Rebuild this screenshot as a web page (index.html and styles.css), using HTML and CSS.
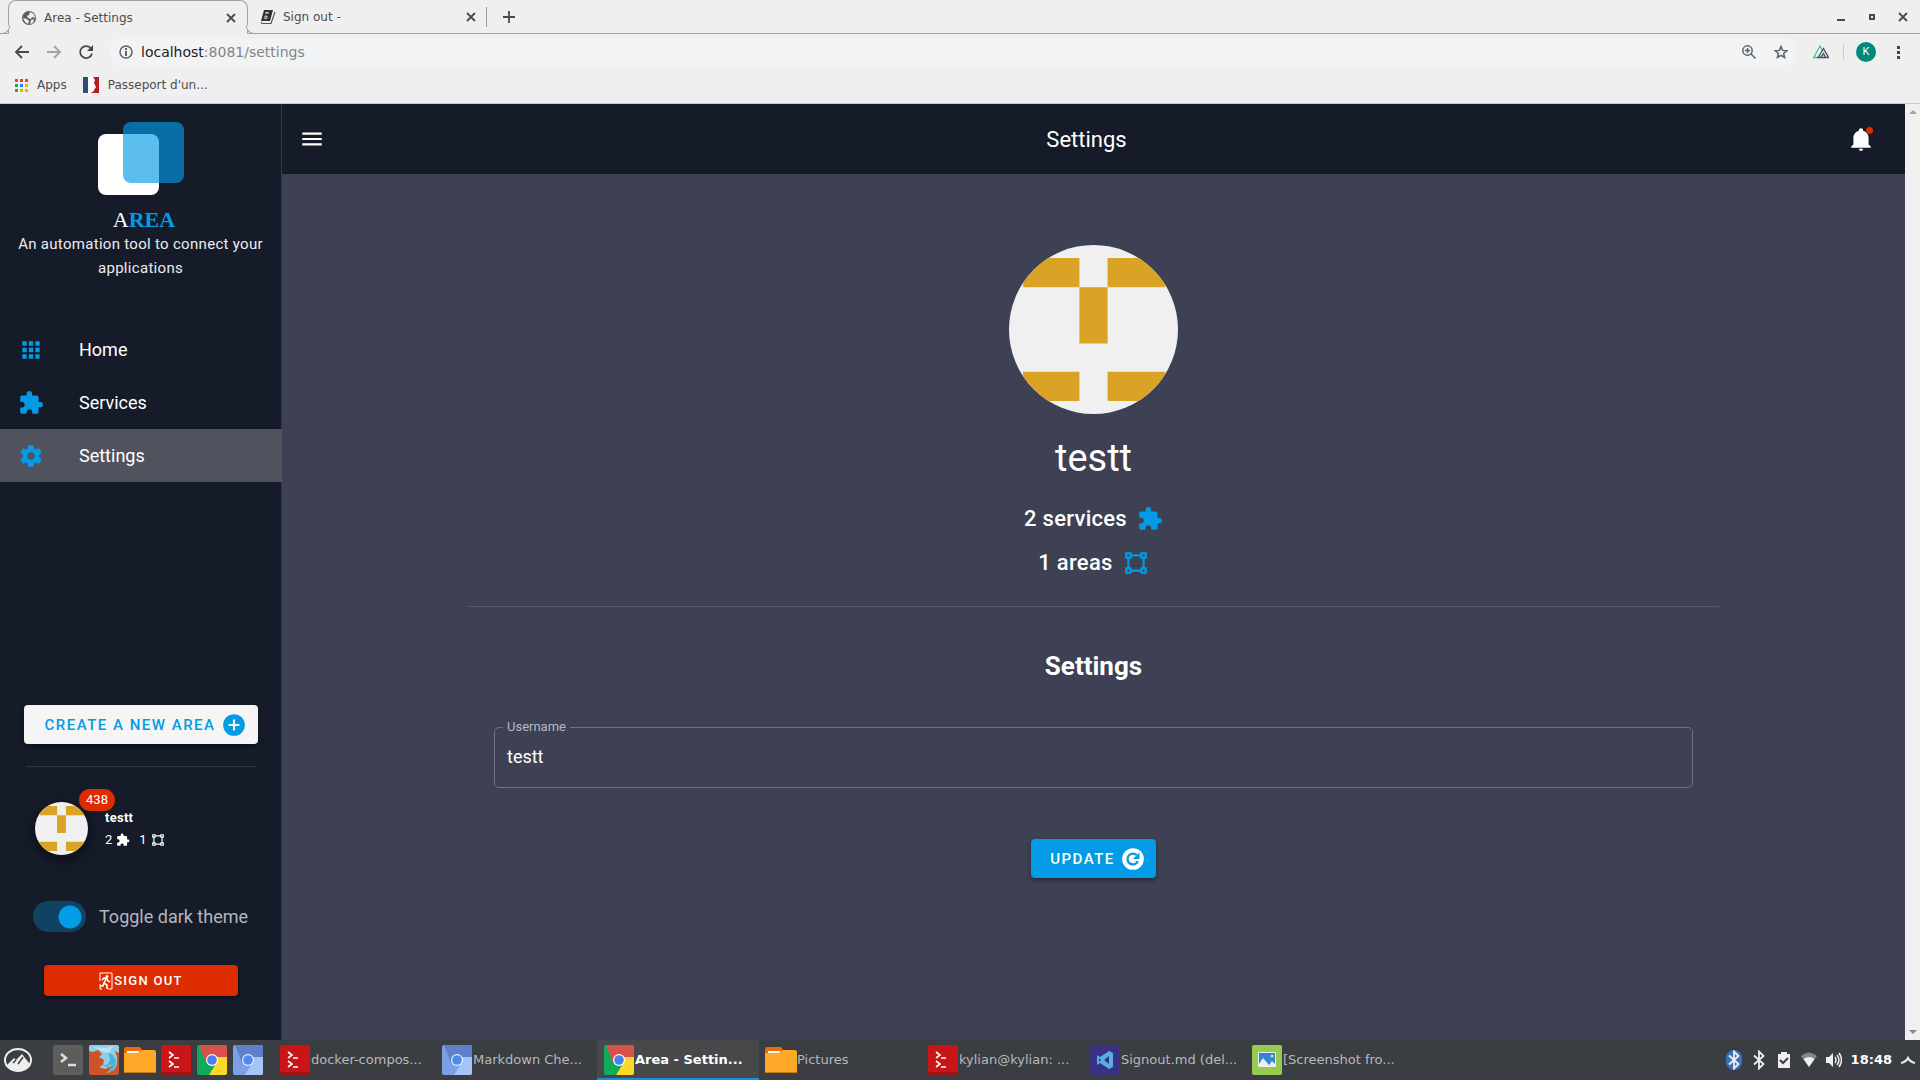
FILE: index.html
```html
<!DOCTYPE html>
<html lang="en">
<head>
<meta charset="utf-8">
<title>Area - Settings</title>
<link rel="stylesheet" href="styles.css">
</head>
<body>
<svg class="sprite" aria-hidden="true">
  <symbol id="apps" viewBox="0 0 24 24"><path d="M16,20H20V16H16M16,14H20V10H16M10,8H14V4H10M16,8H20V4H16M10,14H14V10H10M4,14H8V10H4M4,20H8V16H4M10,20H14V16H10M4,8H8V4H4V8Z"/></symbol>
  <symbol id="puzzle" viewBox="0 0 24 24"><path d="M20.5,11H19V7C19,5.89 18.1,5 17,5H13V3.5A2.5,2.5 0 0,0 10.5,1A2.5,2.5 0 0,0 8,3.5V5H4A2,2 0 0,0 2,7V10.8H3.5C5,10.8 6.2,12 6.2,13.5C6.2,15 5,16.2 3.5,16.2H2V20A2,2 0 0,0 4,22H7.8V20.5C7.8,19 9,17.8 10.5,17.8C12,17.8 13.2,19 13.2,20.5V22H17A2,2 0 0,0 19,20V16H20.5A2.5,2.5 0 0,0 23,13.5A2.5,2.5 0 0,0 20.5,11Z"/></symbol>
  <symbol id="cog" viewBox="0 0 24 24"><path d="M12,15.5A3.5,3.5 0 0,1 8.5,12A3.5,3.5 0 0,1 12,8.5A3.5,3.5 0 0,1 15.5,12A3.5,3.5 0 0,1 12,15.5M19.43,12.97C19.47,12.65 19.5,12.33 19.5,12C19.5,11.67 19.47,11.34 19.43,11L21.54,9.37C21.73,9.22 21.78,8.95 21.66,8.73L19.66,5.27C19.54,5.05 19.27,4.96 19.05,5.05L16.56,6.05C16.04,5.66 15.5,5.32 14.87,5.07L14.5,2.42C14.46,2.18 14.25,2 14,2H10C9.75,2 9.54,2.18 9.5,2.42L9.13,5.07C8.5,5.32 7.96,5.66 7.44,6.05L4.95,5.05C4.73,4.96 4.46,5.05 4.34,5.27L2.34,8.73C2.21,8.95 2.27,9.22 2.46,9.37L4.57,11C4.53,11.34 4.5,11.67 4.5,12C4.5,12.33 4.53,12.65 4.57,12.97L2.46,14.63C2.27,14.78 2.21,15.05 2.34,15.27L4.34,18.73C4.46,18.95 4.73,19.03 4.95,18.95L7.44,17.94C7.96,18.34 8.5,18.68 9.13,18.93L9.5,21.58C9.54,21.82 9.75,22 10,22H14C14.25,22 14.46,21.82 14.5,21.58L14.87,18.93C15.5,18.67 16.04,18.34 16.56,17.94L19.05,18.95C19.27,19.03 19.54,18.95 19.66,18.73L21.66,15.27C21.78,15.05 21.73,14.78 21.54,14.63L19.43,12.97Z"/></symbol>
  <symbol id="vector" viewBox="0 0 24 24"><path d="M2,2H8V4H16V2H22V8H20V16H22V22H16V20H8V22H2V16H4V8H2V2M16,8V6H8V8H6V16H8V18H16V16H18V8H16M4,4V6H6V4H4M18,4V6H20V4H18M4,18V20H6V18H4M18,18V20H20V18H18Z"/></symbol>
  <symbol id="plus-circle" viewBox="0 0 24 24"><path d="M17,13H13V17H11V13H7V11H11V7H13V11H17M12,2A10,10 0 0,0 2,12A10,10 0 0,0 12,22A10,10 0 0,0 22,12A10,10 0 0,0 12,2Z"/></symbol>
  <symbol id="bell" viewBox="0 0 24 24"><path d="M21,19V20H3V19L5,17V11C5,7.9 7.03,5.17 10,4.29C10,4.19 10,4.1 10,4A2,2 0 0,1 12,2A2,2 0 0,1 14,4C14,4.1 14,4.19 14,4.29C16.97,5.17 19,7.9 19,11V17L21,19M14,21A2,2 0 0,1 12,23A2,2 0 0,1 10,21"/></symbol>
  <symbol id="menu" viewBox="0 0 24 24"><path d="M3,6H21V8H3V6M3,11H21V13H3V11M3,16H21V18H3V16Z"/></symbol>
  <symbol id="bluetooth" viewBox="0 0 16 20"><path d="M3 5.500L12.500 14 8 18.500V1.500L12.500 6 3 14.500" fill="none" stroke="#eee" stroke-width="1.800"/></symbol>
  <symbol id="identicon" viewBox="0 0 168 168"><path fill="#f0f0f0" d="M0 0h168v168H0z"/><path fill="#d9a326" d="M14 13h56v29H14zM98 13h57v29H98zM70 42h28v56H70zM14 126h56v29H14zM98 126h57v29H98z"/></symbol>
  <symbol id="app-folder" viewBox="0 0 32 32"><path fill="#ef6c00" d="M0 5q0-2 2-2h14l2 3v6H0z"/><path fill="#ffa726" d="M0 9h15l3-3h12q2 0 2 2v21H0z"/><path fill="#fff" d="M3 7h13l-2 2H3z"/><path fill="#ca7a13" d="M0 28h32v1H0z"/></symbol>
  <symbol id="app-terminator" viewBox="0 0 32 32"><rect x="1" y="1" width="30" height="30" rx="2" fill="#c91517"/><path fill="#a31214" d="M1 28h30v1q0 2-2 2H3q-2 0-2-2z"/><path d="M9 8l4 3-4 3m0 3l4 3-4 3M14 14h5M14 23h5" fill="none" stroke="#fff" stroke-width="1.600"/></symbol>
  <symbol id="app-chrome" viewBox="0 0 32 32"><rect x="1" y="1" width="30" height="30" rx="2" fill="#0dac5c"/><path fill="#d9514a" d="M3 1h26q2 0 2 2v10H16l-6 6z"/><path fill="#fbd924" d="M16 13h15v16q0 2-2 2H13l8-13z"/><circle cx="16" cy="16" r="6" fill="#fff"/><circle cx="16" cy="16" r="4.800" fill="#4c80e6"/></symbol>
  <symbol id="app-chromium" viewBox="0 0 32 32"><rect x="1" y="1" width="30" height="30" rx="2" fill="#7ba1e4"/><path fill="#5c80c9" d="M3 1h26q2 0 2 2v10H16l-6 6z"/><path fill="#a7c4f9" d="M16 13h15v16q0 2-2 2H13l8-13z"/><circle cx="16" cy="16" r="6" fill="#e6eefc"/><circle cx="16" cy="16" r="4.800" fill="#4f8bea"/></symbol>
</svg>

<header class="browser">
  <div class="tabstrip">
    <div class="tab tab-active">
      <svg class="i16" viewBox="0 0 16 16"><circle cx="8" cy="8" r="7" fill="#5a5e63"/><path fill="#efefef" d="M9 2l4 2 1 4-3-1-1 2-3-1-1-2 2-1zM2 8l4 1 2 2-1 3-3-2zM10 10l3-1-1 4-3 1z"/></svg>
      <span class="tab-title">Area - Settings</span>
      <button class="plain" aria-label="Close tab"><svg class="i12" viewBox="0 0 12 12"><path class="line" d="M2 2l8 8M10 2l-8 8"/></svg></button>
    </div>
    <div class="tab">
      <svg class="i16" viewBox="0 0 16 16"><path fill="#303030" d="M4 1h9l-3 11H1z"/><path fill="none" stroke="#555" stroke-width="1.200" d="M1 13l1 1.500h9L15 3"/><path stroke="#ddd" fill="none" d="M6 5V3l1 1 1-1v2M5 10V7h2v2z"/></svg>
      <span class="tab-title">Sign out -</span>
      <button class="plain" aria-label="Close tab"><svg class="i12" viewBox="0 0 12 12"><path class="line" d="M2 2l8 8M10 2l-8 8"/></svg></button>
    </div>
    <button class="plain new-tab" aria-label="New tab"><svg class="i12" viewBox="0 0 12 12"><path class="line" d="M6 0v12M0 6h12"/></svg></button>
    <div class="window-buttons">
      <button class="plain" aria-label="Minimize"><svg class="i12" viewBox="0 0 12 12"><path fill="#4a4a4a" d="M2 8h8v2H2z"/></svg></button>
      <button class="plain" aria-label="Maximize"><svg class="i12" viewBox="0 0 12 12"><path fill="none" stroke="#4a4a4a" stroke-width="2" d="M4 4h4v4H4z"/></svg></button>
      <button class="plain" aria-label="Close"><svg class="i12" viewBox="0 0 12 12"><path class="line" d="M2 2l8 8M10 2l-8 8"/></svg></button>
    </div>
  </div>
  <div class="toolbar">
    <button class="plain" aria-label="Back"><svg class="i16" viewBox="0 0 16 16"><path class="line" d="M15 8H2M8 2L2 8l6 6"/></svg></button>
    <button class="plain faded" aria-label="Forward"><svg class="i16" viewBox="0 0 16 16"><path class="line" d="M1 8h13M8 2l6 6-6 6"/></svg></button>
    <button class="plain" aria-label="Reload"><svg class="i16" viewBox="0 0 16 16"><path class="line" d="M13 4.500A6 6 0 1 0 14 9.500"/><path fill="#444" d="M15 1v6H9z"/></svg></button>
    <div class="omnibox">
      <svg class="i14" viewBox="0 0 14 14"><circle cx="7" cy="7" r="6" fill="none" stroke="#5f6368" stroke-width="1.500"/><path fill="#5f6368" d="M6 6h2v5H6zM6 3h2v2H6z"/></svg>
      <div class="url"><b>localhost</b>:8081/settings</div>
      <button class="plain" aria-label="Zoom"><svg class="i14" viewBox="0 0 14 14"><circle cx="5.500" cy="5.500" r="4.700" fill="none" stroke="#5f6368" stroke-width="1.500"/><path fill="none" stroke="#5f6368" stroke-width="1.500" d="M9 9l4.500 4.500M3 5.500h5M5.500 3v5"/></svg></button>
      <button class="plain" aria-label="Bookmark"><svg class="i14" viewBox="0 0 14 14"><path fill="none" stroke="#5f6368" stroke-width="1.500" d="M7 1.500l1.600 3.900 4.200.3-3.200 2.700 1 4.100L7 10.300l-3.600 2.200 1-4.100-3.200-2.700 4.200-.3z"/></svg></button>
    </div>
    <svg class="i16" viewBox="0 0 16 16"><path fill="none" stroke="#2ecc95" stroke-width="1.300" d="M5 13.500H.7L7 2l3 5.500"/><path fill="none" stroke="#435466" stroke-width="1.300" d="M5 13.500L10.500 4.500l5 9zM7.500 13.500l3-4 2 4"/></svg>
    <span class="avatar-k">K</span>
    <button class="plain" aria-label="Menu"><svg class="i14" viewBox="0 0 14 14"><path fill="#444" d="M5 1h3v3H5zM5 6h3v3H5zM5 11h3v3H5z"/></svg></button>
  </div>
  <nav class="bookmarks" aria-label="Bookmarks">
    <a href="#apps-page"><svg class="i14" viewBox="0 0 14 14"><path fill="#ea4335" d="M1 1h3v3H1zM6 1h3v3H6zM11 1h3v3h-3z"/><path fill="#2e9e5b" d="M1 6h3v3H1zM1 11h3v3H1z"/><path fill="#1a7ff0" d="M6 6h3v3H6z"/><path fill="#f9ab00" d="M11 6h3v3h-3zM6 11h3v3H6zM11 11h3v3h-3z"/></svg>Apps</a>
    <a href="#passeport"><svg class="i16" viewBox="0 0 16 16"><path fill="#fff" d="M0 0h16v16H0z"/><path fill="#344a78" d="M0 0h5v16H0z"/><path fill="#b81c1c" d="M10 0h6v16H7q4-1 4-3l2-3-2-4 1-3z"/></svg>Passeport d'un...</a>
  </nav>
</header>

<div class="viewport">
  <aside class="sidebar">
    <div class="brand">
      <svg class="brand-logo" viewBox="0 0 86 74"><rect x="0" y="12" width="61" height="61" rx="8" fill="#fff"/><rect x="25" y="0" width="61" height="61" rx="8" fill="#039be5" fill-opacity=".65"/></svg>
      <div class="brand-name">A<b>REA</b></div>
      <p class="brand-text">An automation tool to connect your applications</p>
    </div>
    <nav class="menu" aria-label="Main">
      <a href="#home"><svg class="icon"><use href="#apps"/></svg>Home</a>
      <a href="#services"><svg class="icon"><use href="#puzzle"/></svg>Services</a>
      <a class="current" href="#settings"><svg class="icon"><use href="#cog"/></svg>Settings</a>
    </nav>
    <div class="sidebar-foot">
      <button class="btn btn-light">Create a new area<svg class="icon"><use href="#plus-circle"/></svg></button>
      <hr class="rule">
      <div class="user">
        <div class="user-avatar">
          <svg class="face"><use href="#identicon"/></svg>
          <span class="count">438</span>
        </div>
        <div class="user-info">
          <strong>testt</strong>
          <span class="user-stats">2<svg class="i14"><use href="#puzzle"/></svg><span>1</span><svg class="i14"><use href="#vector"/></svg></span>
        </div>
      </div>
      <label class="toggle"><input type="checkbox" checked>Toggle dark theme</label>
      <button class="btn btn-danger"><svg class="exit" viewBox="0 0 14 18"><path fill="none" stroke="#fff" d="M1 9V1h12v16H9M1 17v-5M3 17H1"/><circle cx="8" cy="4.500" r="1.500" fill="#fff"/><path fill="none" stroke="#fff" stroke-width="1.600" d="M3 8l2-2 3 1 1 2 2 1M7 7l-2 4 3 2v4M5 11l-1 3H1"/></svg>Sign out</button>
    </div>
  </aside>

  <div class="page">
    <div class="appbar">
      <button class="plain icon-btn" aria-label="Toggle menu"><svg class="icon"><use href="#menu"/></svg></button>
      <div class="appbar-title">Settings</div>
      <button class="plain icon-btn" aria-label="Notifications"><svg class="icon"><use href="#bell"/></svg><span class="dot"></span></button>
    </div>
    <main class="content">
      <section class="profile">
        <svg class="portrait"><use href="#identicon"/></svg>
        <h1>testt</h1>
        <p class="stat">2 services<svg class="icon"><use href="#puzzle"/></svg></p>
        <p class="stat">1 areas<svg class="icon"><use href="#vector"/></svg></p>
      </section>
      <form class="settings">
        <h2>Settings</h2>
        <fieldset class="field">
          <legend><label for="username">Username</label></legend>
          <input id="username" type="text" value="testt">
        </fieldset>
        <button class="btn btn-primary" type="button">Update<svg class="icon" viewBox="0 0 24 24"><circle cx="12" cy="12" r="10" fill="#fff"/><path fill="none" stroke="#039be5" stroke-width="2.200" d="M15.500 8.500A5 5 0 1 0 16.500 14"/><path fill="#039be5" d="M18 6v6h-6z"/></svg></button>
      </form>
    </main>
  </div>

  <div class="scrollbar" aria-hidden="true">
    <svg class="arrow" viewBox="0 0 8 4"><path fill="#a3a3a3" d="M0 4l4-4 4 4z"/></svg>
    <svg class="arrow" viewBox="0 0 8 4"><path fill="#888" d="M0 0l4 4 4-4z"/></svg>
  </div>
</div>

<footer class="taskbar">
  <svg class="start" viewBox="0 0 30 30"><ellipse cx="15" cy="15" rx="13" ry="11" fill="none" stroke="#eee" stroke-width="2"/><path fill="#eee" d="M4 20l7-7 2 2 6-6 3 4 5 6q-4 7-12 7T4 20z"/><path stroke="#3a3d42" stroke-width="1.500" d="M10 18l3-3M15 19l5-7"/></svg>
  <div class="launchers">
    <svg class="app" viewBox="0 0 32 32"><rect x="1" y="1" width="30" height="30" rx="2" fill="#5d5d5d"/><path fill="none" stroke="#ddd" stroke-width="2.500" d="M9 10l5 4-5 4M16 21h8"/></svg>
    <svg class="app" viewBox="0 0 32 32"><rect x="1" y="1" width="30" height="30" rx="2" fill="#cd5427"/><path fill="#8fd0e8" d="M1 3q0-2 2-2h26q2 0 2 2v6l-4-2 2 6v7q-2 8-11 9 5-3 5-7l-6 3-6-2 4-2 1-5-5-3 3-3-4-4-5 2-4-1z"/><path fill="#4bb3d6" d="M20 9l5 2 3 6q0 9-8 12 4-5 3-9l-4 3-4-1 5-2 2-5z"/><path fill="#bce5f2" d="M5 3l12 1 8-2-4 7-7-2z"/></svg>
    <svg class="app"><use href="#app-folder"/></svg>
    <svg class="app"><use href="#app-terminator"/></svg>
    <svg class="app"><use href="#app-chrome"/></svg>
    <svg class="app"><use href="#app-chromium"/></svg>
  </div>
  <div class="tasks">
    <button class="task"><svg class="app"><use href="#app-terminator"/></svg>docker-compos...</button>
    <button class="task"><svg class="app"><use href="#app-chromium"/></svg>Markdown Che...</button>
    <button class="task task-active"><svg class="app"><use href="#app-chrome"/></svg>Area - Settin...</button>
    <button class="task"><svg class="app"><use href="#app-folder"/></svg>Pictures</button>
    <button class="task"><svg class="app"><use href="#app-terminator"/></svg>kylian@kylian: ...</button>
    <button class="task"><svg class="app" viewBox="0 0 32 32"><rect x="1" y="1" width="30" height="30" rx="2" fill="#393181"/><path fill="#5aaee8" fill-rule="evenodd" d="M8 11l3 2 9-6 4 2v14l-4 2-9-6-3 2zM10 14v4l2-2zM20 12l-5 4 5 4z"/></svg>Signout.md (del...</button>
    <button class="task"><svg class="app" viewBox="0 0 32 32"><rect x="1" y="1" width="30" height="30" rx="2" fill="#97ca50"/><rect x="7" y="8" width="18" height="15" rx="1" fill="#eee"/><path fill="#2b88d8" d="M8 9h16v11l-3-3-3 4-6-7-4 6z"/><circle cx="21" cy="12" r="1.500" fill="#ffd54f"/></svg>[Screenshot fro...</button>
  </div>
  <div class="tray">
    <span class="bt-badge"><svg class="tray-icon"><use href="#bluetooth"/></svg></span>
    <svg class="tray-icon"><use href="#bluetooth"/></svg>
    <svg class="tray-icon" viewBox="0 0 16 20"><path fill="#eee" d="M2 4h3V2h6v2h3v14H2z"/><path fill="none" stroke="#3a3d42" stroke-width="2" d="M4 10l3 3 5-5"/></svg>
    <svg class="tray-icon" viewBox="0 0 16 20"><path fill="#85888b" d="M0 6q8-7 16 0l-8 11z"/><path fill="#eee" d="M2.500 9q5.500-4 11 0L8 17z"/></svg>
    <svg class="tray-icon" viewBox="0 0 16 20"><path fill="#eee" d="M0 7h3l4-4v14l-4-4H0z"/><path fill="none" stroke="#eee" stroke-width="1.500" d="M9 7q2 3 0 6M11 5q4 5 0 10M13 3q5 7 0 14"/></svg>
    <time>18:48</time>
    <svg class="i14" viewBox="0 0 14 14"><path fill="none" stroke="#eee" stroke-width="2" d="M0 10q5-1 7-5 2 4 7 5"/></svg>
  </div>
</footer>
</body>
</html>
```
FILE: styles.css
```css
* { box-sizing: border-box; }

body {
  margin: 0;
  min-height: 100vh;
  display: flex;
  flex-direction: column;
  background: #3d4153;
  color: #fff;
  font-family: Roboto, "Liberation Sans", sans-serif;
}

h1, h2, p { margin: 0; }
a { color: inherit; text-decoration: none; }
svg { display: block; flex: none; fill: currentColor; }

.sprite { display: none; }
.i12 { width: 12px; height: 12px; }
.i14 { width: 14px; height: 14px; }
.i16 { width: 16px; height: 16px; }
.icon { width: 26px; height: 26px; }
.line { fill: none; stroke: #4a4a4a; stroke-width: 1.8; }

.plain {
  display: block;
  padding: 0;
  border: 0;
  background: none;
  color: inherit;
}

/* Browser frame */
.browser {
  background: #efefef;
  color: #4d4d4d;
  font: 12px/16px "DejaVu Sans", sans-serif;
  border-bottom: 1px solid #ccc;
}

.tabstrip {
  display: flex;
  height: 34px;
  padding-left: 8px;
  border-bottom: 1px solid #a3a3a3;
}

.tab {
  position: relative;
  display: flex;
  align-items: center;
  gap: 7px;
  width: 239px;
  padding: 0 10px 0 12px;
}
.tab:not(.tab-active)::after {
  content: "";
  position: absolute;
  right: 0;
  top: 7px;
  height: 20px;
  border-right: 1px solid #999;
}

.tab-active {
  width: 240px;
  height: 34px;
  background: #efefef;
  border: 1px solid #a3a3a3;
  border-bottom: 0;
  border-radius: 8px 8px 0 0;
}
.tab-active::before, .tab-active::after {
  content: "";
  position: absolute;
  bottom: 0;
  width: 8px;
  height: 8px;
  background: #efefef;
  border-bottom: 1px solid #a3a3a3;
}
.tab-active::before {
  left: -8px;
  border-right: 1px solid #a3a3a3;
  border-bottom-right-radius: 8px;
}
.tab-active::after {
  right: -8px;
  border-left: 1px solid #a3a3a3;
  border-bottom-left-radius: 8px;
}
.tab-title { flex: 1; }
.new-tab { margin-left: 16px; }

.window-buttons {
  display: flex;
  align-items: center;
  gap: 19px;
  margin-left: auto;
  padding-right: 11px;
}

.toolbar {
  display: flex;
  align-items: center;
  gap: 16px;
  height: 36px;
  padding: 0 14px;
}
.faded { opacity: .45; }

.omnibox {
  flex: 1;
  display: flex;
  align-items: center;
  gap: 18px;
  height: 28px;
  padding: 0 9px;
  border-radius: 14px;
  background: #f1f3f4;
}
.url {
  flex: 1;
  margin-left: -10px;
  font-size: 14px;
  color: #80868b;
}
.url b { font-weight: 400; color: #202124; }

.avatar-k {
  position: relative;
  width: 20px;
  margin-left: 11px;
  border-radius: 50%;
  background: #00897b;
  color: #fff;
  font: 11px/20px Roboto, sans-serif;
  text-align: center;
}
.avatar-k::before {
  content: "";
  position: absolute;
  left: -13px;
  top: 2px;
  height: 16px;
  border-left: 1px solid #ccc;
}

.bookmarks {
  display: flex;
  gap: 16px;
  height: 33px;
  padding: 0 14px 4px;
}
.bookmarks a { display: flex; align-items: center; gap: 9px; }

/* Application */
.viewport { flex: 1; display: flex; }

.sidebar {
  display: flex;
  flex-direction: column;
  flex: none;
  width: 282px;
  background: #161b2a;
  border-right: 1px solid #323645;
}

.brand { padding: 18px 16px 0; text-align: center; }
.brand-logo { width: 86px; height: 74px; margin: 0 auto 11px; }
.brand-name { padding-left: 7px; font: 22px/25px "Liberation Serif", serif; }
.brand-name b { color: #039be5; }
.brand-text {
  font-size: 15px;
  line-height: 24px;
  letter-spacing: .02em;
  color: #ececee;
}

.menu { margin-top: 43px; }
.menu a {
  display: flex;
  align-items: center;
  gap: 35px;
  height: 53px;
  padding-left: 18px;
  font-size: 18px;
}
.menu .icon { color: #039be5; }
.menu .current { background: #50535e; margin-right: -1px; }

.sidebar-foot {
  display: flex;
  flex-direction: column;
  margin-top: auto;
  padding: 0 23px 44px 24px;
}

.btn {
  display: flex;
  align-items: center;
  justify-content: center;
  gap: 5px;
  height: 39px;
  padding: 0 10px 0 19px;
  border: 0;
  border-radius: 4px;
  font: 500 15px/24px Roboto, sans-serif;
  letter-spacing: .1em;
  text-transform: uppercase;
  color: #fff;
  box-shadow: 0 2px 4px rgba(0, 0, 0, .4);
}
.btn-light { background: #f5f5f5; color: #039be5; }
.btn-primary { background: #039be5; }
.btn-danger {
  gap: 1px;
  height: 31px;
  margin: 0 20px;
  padding: 0;
  background: #dd2c00;
  font-size: 13px;
}
.exit { width: 14px; height: 18px; }

.rule {
  margin: 22px 2px 0;
  border: 0;
  border-top: 1px solid #323645;
}

.user { display: flex; gap: 17px; margin: 35px 0 0 11px; }
.user-avatar {
  position: relative;
  width: 53px;
  height: 53px;
  border-radius: 50%;
  box-shadow: 0 4px 8px 4px rgba(0, 0, 0, .3);
}
.face { width: 53px; height: 53px; border-radius: 50%; }
.count {
  position: absolute;
  left: 44px;
  top: -13px;
  width: 36px;
  border-radius: 11px;
  background: #dd2c00;
  font-size: 13px;
  line-height: 22px;
  text-align: center;
}
.user-info { padding-top: 5px; font-size: 13px; line-height: 22px; }
.user-info strong { display: block; letter-spacing: .02em; }
.user-stats { display: flex; align-items: center; gap: 4px; }
.user-stats span { margin-left: 5px; }

.toggle {
  display: flex;
  align-items: center;
  gap: 13px;
  margin: 46px 0 33px 9px;
  font-size: 18px;
  white-space: nowrap;
  color: #b4b6bb;
}
.toggle input {
  appearance: none;
  flex: none;
  width: 53px;
  height: 31px;
  margin: 0;
  border-radius: 16px;
  background: radial-gradient(circle at 37px 16px, #039be5 11px, #0f4263 12px);
}

.page { flex: 1; display: flex; flex-direction: column; }
.appbar {
  display: flex;
  align-items: center;
  height: 70px;
  padding: 0 31px 0 17px;
  background: #161b2a;
}
.icon-btn { position: relative; }
.appbar-title { flex: 1; text-align: center; font-size: 22px; }
.dot {
  position: absolute;
  right: 1px;
  top: 1px;
  width: 7px;
  height: 7px;
  border-radius: 50%;
  background: #dd2c00;
}

.content { padding: 71px 186px 0; }
.profile {
  display: flex;
  flex-direction: column;
  align-items: center;
  padding-bottom: 21px;
  border-bottom: 1px solid #555968;
}
.portrait { width: 169px; height: 169px; border-radius: 50%; }
.profile h1 {
  margin: 22px 0 17px;
  font-size: 38px;
  font-weight: 400;
  line-height: 44px;
}
.stat {
  display: flex;
  align-items: center;
  gap: 10px;
  font-size: 22px;
  font-weight: 500;
  line-height: 44px;
  letter-spacing: .0125em;
}
.stat .icon { color: #039be5; }

.settings {
  display: flex;
  flex-direction: column;
  align-items: center;
  padding: 43px 26px;
}
.settings h2 { font-size: 26px; line-height: 32px; }

.field {
  width: 100%;
  min-width: 0;
  margin: 37px 0 51px;
  padding: 0 12px;
  border: 1px solid #6f7280;
  border-radius: 5px;
}
.field legend {
  margin-left: -4px;
  padding: 0 4px;
  font-size: 13px;
  line-height: 16px;
  color: #b7b9c0;
}
.field input {
  display: block;
  width: 100%;
  height: 52px;
  padding: 0 0 9px;
  border: 0;
  outline: 0;
  background: none;
  color: #fff;
  font: 18px/24px Roboto, sans-serif;
}

.scrollbar {
  display: flex;
  flex-direction: column;
  align-items: center;
  justify-content: space-between;
  width: 15px;
  padding: 6px 0;
  background: #f0f0f0;
}
.arrow { width: 8px; height: 4px; }

/* Desktop panel */
.taskbar {
  display: flex;
  height: 40px;
  background: #3a3d42;
  font: 13px/40px "DejaVu Sans", sans-serif;
}
.start { width: 30px; height: 30px; margin: 5px 0 0 3px; }
.app { width: 32px; height: 32px; }
.launchers {
  display: flex;
  align-items: center;
  gap: 4px;
  margin: 0 9px 0 19px;
}
.tasks { display: flex; }
.task {
  display: flex;
  align-items: center;
  width: 162px;
  padding: 0 0 0 6px;
  border: 0;
  background: none;
  color: #b8b9ba;
  font: inherit;
  white-space: nowrap;
}
.task-active {
  background: #47484a;
  color: #fff;
  font-weight: 700;
  box-shadow: inset 0 -2px #1f8ed3;
}
.tray {
  display: flex;
  align-items: center;
  gap: 9px;
  margin-left: auto;
  padding-right: 5px;
}
.tray-icon { width: 16px; height: 20px; }
.bt-badge { border-radius: 8px; background: #3b70b8; }
.tray time { font-weight: 700; }
```
